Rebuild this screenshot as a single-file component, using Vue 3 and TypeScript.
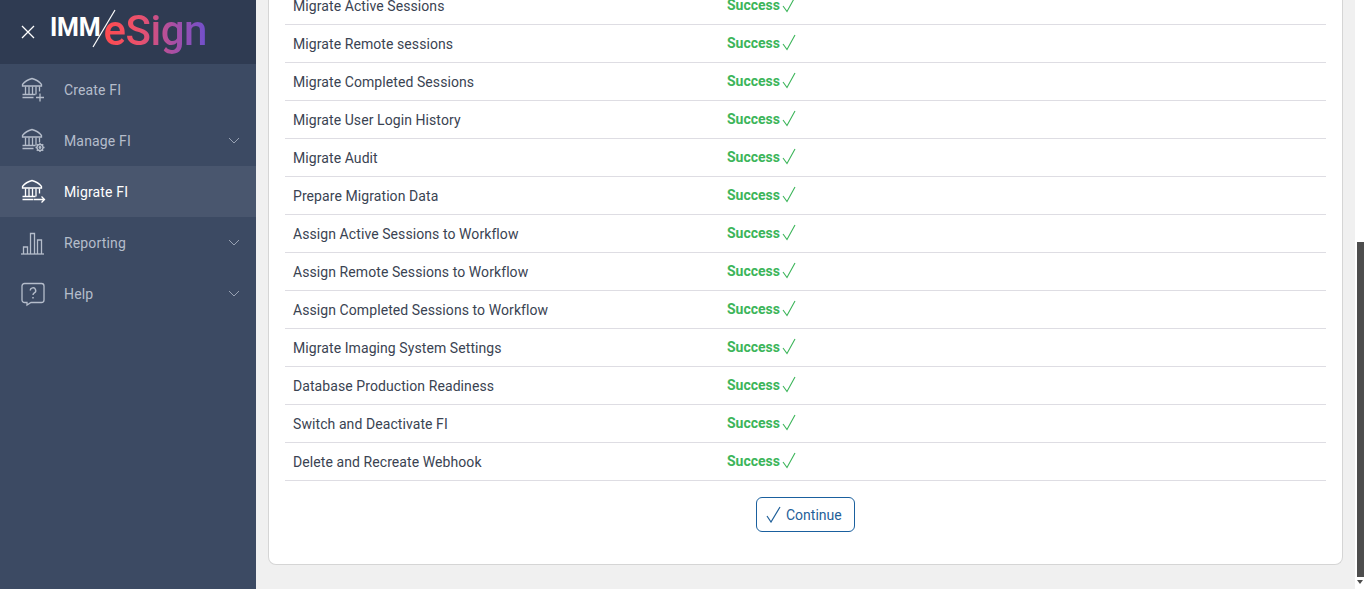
<script setup lang="ts">
interface NavItem { label: string; icon: string; caret: boolean; active?: boolean }
const nav: NavItem[] = [
  { label: 'Create FI', icon: 'create', caret: false },
  { label: 'Manage FI', icon: 'manage', caret: true },
  { label: 'Migrate FI', icon: 'migrate', caret: false, active: true },
  { label: 'Reporting', icon: 'report', caret: true },
  { label: 'Help', icon: 'help', caret: true },
]
const steps: string[] = [
  'Migrate Active Sessions',
  'Migrate Remote sessions',
  'Migrate Completed Sessions',
  'Migrate User Login History',
  'Migrate Audit',
  'Prepare Migration Data',
  'Assign Active Sessions to Workflow',
  'Assign Remote Sessions to Workflow',
  'Assign Completed Sessions to Workflow',
  'Migrate Imaging System Settings',
  'Database Production Readiness',
  'Switch and Deactivate FI',
  'Delete and Recreate Webhook',
]
</script>

<template>
  <div class="page">
    <aside class="sidebar">
      <header class="brand">
        <svg class="close" width="16" height="16" viewBox="0 0 16 16"><path d="M2 2l12 12M14 2L2 14" stroke="#fff" stroke-width="1.3" fill="none"/></svg>
        <div class="logo">
          <span class="imm">IMM</span>
          <svg class="slash" width="24" height="40" viewBox="0 0 24 40"><path d="M1 38L23 1" stroke="#fff" stroke-width="1.2" fill="none"/></svg>
          <span class="esign">eSign</span>
        </div>
      </header>
      <nav>
        <a v-for="item in nav" :key="item.label" class="nav-item" :class="{ active: item.active }">
          <svg class="nav-icon" width="26" height="26" viewBox="0 0 26 26" fill="none" stroke="currentColor" stroke-width="1.3">
            <template v-if="item.icon === 'create' || item.icon === 'manage' || item.icon === 'migrate'">
              <path d="M2.500 7.500Q6 3 12 1.500q6 1.500 9.500 6v1.500h-19z"/>
              <path d="M5.500 9.500v8M9 9.500v8M12.500 9.500v8M16 9.500v8M19.500 9.500v5"/>
              <path d="M2.500 17.500h13M2.500 20.500h11"/>
            </template>
            <template v-if="item.icon === 'create'">
              <path d="M20 16.500v8M16 20.500h8"/>
            </template>
            <template v-if="item.icon === 'manage'">
              <circle cx="20" cy="19.500" r="3"/>
              <circle cx="20" cy="19.500" r=".8" />
              <path d="M20 15v1.500M20 22.500V24M15.500 19.500H17M23 19.500h1.500M16.800 16.300l1 1M22.200 21.700l1 1M23.200 16.300l-1 1M17.800 21.700l-1 1"/>
            </template>
            <template v-if="item.icon === 'migrate'">
              <path d="M14 20.500h10.500M21.500 17.500l3 3-3 3"/>
            </template>
            <template v-if="item.icon === 'report'">
              <path d="M1 24h23"/>
              <path d="M3.500 24v-7h4v7M10.500 24V3.500h4V24M17.500 24V10h4v14"/>
            </template>
            <template v-if="item.icon === 'help'">
              <path d="M4.500 2.500h17a2.500 2.500 0 0 1 2.500 2.500v14a2.500 2.500 0 0 1-2.500 2.500H11l-4 2.500v-2.500H4.500A2.500 2.500 0 0 1 2 19V5a2.500 2.500 0 0 1 2.500-2.500z"/>
              <path d="M10.300 9.500a2.700 2.700 0 1 1 4 2.400c-.9.5-1.300 1-1.300 2.100" stroke-width="1.400"/>
              <path d="M13 16v1.600" stroke-width="1.500"/>
            </template>
          </svg>
          <span class="nav-label">{{ item.label }}</span>
          <svg v-if="item.caret" class="caret" width="12" height="7" viewBox="0 0 12 7"><path d="M1 1l5 5 5-5" stroke="currentColor" stroke-width="1" fill="none"/></svg>
        </a>
      </nav>
    </aside>

    <main class="main">
      <section class="card">
        <div v-for="step in steps" :key="step" class="row">
          <span class="step">{{ step }}</span>
          <span class="status">Success
            <svg class="tick" width="14" height="17" viewBox="0 0 14 17"><path d="M1 10l4 5.500L13 1" stroke="#3cb55a" stroke-width="1.100" fill="none"/></svg>
          </span>
        </div>
        <div class="actions">
          <button class="continue" type="button">
            <svg width="15" height="17" viewBox="0 0 15 17"><path d="M1 10l4 6 9-15" stroke="#1f5f99" stroke-width="1.200" fill="none"/></svg>
            Continue
          </button>
        </div>
      </section>
    </main>

    <div class="scrollbar">
      <div class="thumb"></div>
      <div class="arrow"></div>
    </div>
  </div>
</template>

<style>
html, body { margin: 0; overflow: hidden; }
</style>

<style scoped>
.page {
  display: flex;
  height: 589px;
  overflow: hidden;
  font-family: Roboto, "Liberation Sans", sans-serif;
  font-size: 14px;
}
.sidebar {
  width: 256px;
  flex: none;
  background: #3c4a63;
}
.brand {
  height: 64px;
  background: #2f3b52;
  display: flex;
  align-items: center;
  padding-left: 20px;
  box-sizing: border-box;
}
.close { flex: none; }
.logo {
  display: flex;
  align-items: flex-start;
  margin-left: 14px;
  height: 64px;
  position: relative;
}
.imm {
  color: #fff;
  font: 700 25px/1 Roboto, sans-serif;
  margin-top: 15px;
  letter-spacing: -.2px;
}
.slash { position: absolute; left: 42px; top: 9px; }
.esign {
  font: 500 42px/1 Roboto, sans-serif;
  margin-top: 10px;
  margin-left: 3px;
  letter-spacing: -.5px;
  background: linear-gradient(90deg, #ff4b4f 0%, #e9516d 35%, #a44fa8 70%, #6f50cc 100%);
  -webkit-background-clip: text;
  background-clip: text;
  color: transparent;
  padding-bottom: 10px;
}
.nav-item {
  display: flex;
  align-items: center;
  height: 51px;
  padding: 0 16px 0 20px;
  color: #b5bdcb;
}
.nav-item.active {
  background: #49566e;
  color: #fff;
}
.nav-icon { flex: none; color: #b5bdcb; }
.active .nav-icon { color: #fff; }
.nav-label {
  margin-left: 18px;
  flex: 1;
  font-weight: 400;
  letter-spacing: .15px;
}
.caret { color: #98a2b3; margin-right: 0; }

.main {
  flex: 1;
  min-width: 0;
  background: #f0f0f0;
  display: flex;
  flex-direction: column;
  justify-content: flex-end;
  padding: 0 12px 24px;
  box-sizing: border-box;
  overflow: hidden;
}
.card {
  flex: none;
  background: #fff;
  border: 1px solid #d5d5d5;
  border-top: 0;
  border-radius: 0 0 8px 8px;
  padding: 0 16px;
}
.row {
  display: flex;
  align-items: center;
  height: 37px;
  border-bottom: 1px solid #dedde3;
  padding-left: 8px;
  color: #3a4352;
}
.step { width: 434px; flex: none; letter-spacing: .08px; }
.status {
  display: flex;
  align-items: center;
  gap: 2px;
  color: #3cb55a;
  font-weight: 700;
  margin-top: -2px;
}
.tick { margin-top: -1px; }
.actions {
  display: flex;
  justify-content: center;
  padding: 16px 0 32px;
}
.continue {
  display: flex;
  align-items: center;
  gap: 5px;
  height: 35px;
  width: 99px;
  box-sizing: border-box;
  padding: 0 0 0 9px;
  border: 1px solid #1a609e;
  border-radius: 6px;
  background: #fff;
  color: #1f5f99;
  font: 400 14px Roboto, sans-serif;
}
.scrollbar {
  width: 11px;
  flex: none;
  background: #fff;
  position: relative;
}
.thumb {
  margin: 242px 2px 0 2px;
  width: 7px;
  height: 335px;
  background: #4d4d4d;
}
.arrow {
  margin: 3px 0 0 2px;
  width: 0;
  height: 0;
  border-left: 3.500px solid transparent;
  border-right: 3.500px solid transparent;
  border-top: 4px solid #4d4d4d;
}
</style>
